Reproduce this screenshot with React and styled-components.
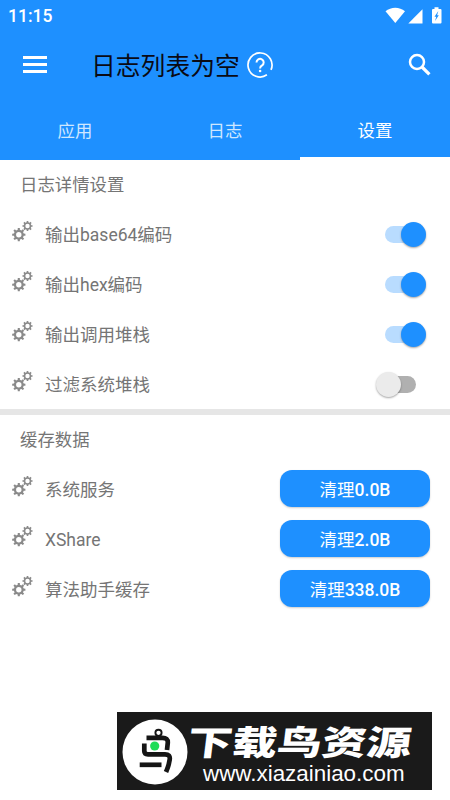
import React, { useState } from 'react';
import styled, { createGlobalStyle } from 'styled-components';

const BLUE = '#1e90ff';

const GlobalStyle = createGlobalStyle`
    * {
        box-sizing: border-box;
    }

    body {
        margin: 0;
        background: #fff;
        font-family: Roboto, "Noto Sans CJK SC", sans-serif;
    }
`;

const Screen = styled.div`
    display: flex;
    flex-direction: column;
    height: 800px;
    overflow: hidden;
    background: #fff;
`;

const Header = styled.header`
    height: 160px;
    background: ${BLUE};
    color: #fff;
`;

const StatusBar = styled.div`
    display: flex;
    align-items: center;
    justify-content: space-between;
    height: 30px;
    padding: 1px 7px 0 8px;
    font-size: 17.5px;
    font-weight: 500;
`;

const Toolbar = styled.div`
    display: flex;
    align-items: center;
    height: 70px;
    padding: 0 18px 0 23px;
`;

const MenuButton = styled.button`
    display: flex;
    flex-direction: column;
    gap: 4px;
    width: 24px;
    margin-bottom: 1px;
    padding: 0;
    border: 0;
    background: none;
`;

const MenuLine = styled.span`
    height: 3px;
    background: #fff;
`;

const Title = styled.h1`
    margin: 0 7px 0 44px;
    padding-top: 4px;
    color: #0a0a14;
    font-size: 24.8px;
    font-weight: 400;
    line-height: 36px;
`;

const SearchIcon = styled.svg`
    margin-left: auto;
`;

const Tabs = styled.nav`
    display: flex;
    height: 60px;
`;

const Tab = styled.button`
    flex: 1;
    padding: 4px 0 0;
    border: 0;
    border-bottom: 3px solid ${({ $active }) => ($active ? '#fff' : BLUE)};
    background: none;
    color: ${({ $active }) => ($active ? '#fff' : '#cfe7ff')};
    font: 400 17.4px/24px Roboto, "Noto Sans CJK SC", sans-serif;
`;

const SectionTitle = styled.h2`
    height: 49px;
    margin: 0;
    padding: 1px 0 0 20px;
    color: #757575;
    font-size: 17.4px;
    font-weight: 400;
    line-height: 49px;
`;

const Divider = styled.div`
    height: 6px;
    background: #e6e6e6;
`;

const Row = styled.div`
    display: flex;
    align-items: center;
    height: 50px;
    padding: 0 20px 0 12px;
    color: #757575;
`;

const RowLabel = styled.span`
    flex: 1;
    margin-left: 12px;
    padding-top: 1px;
    font-size: 17.5px;
    line-height: 26px;
`;

const Track = styled.button`
    display: flex;
    align-items: center;
    justify-content: ${({ $on }) => ($on ? 'flex-end' : 'flex-start')};
    width: 31px;
    height: 17px;
    margin: 0 14px 0 0;
    padding: 0;
    border: 0;
    border-radius: 9px;
    background: ${({ $on }) => ($on ? '#b9dcff' : '#b0b0b0')};
`;

const Thumb = styled.span`
    flex: none;
    width: 25px;
    height: 25px;
    margin: 0 -9.5px;
    border-radius: 50%;
    background: ${({ $on }) => ($on ? BLUE : '#ebebeb')};
    box-shadow: 0 1px 2px rgba(0, 0, 0, 0.35);
`;

const ClearButton = styled.button`
    width: 150px;
    height: 37px;
    margin-bottom: 2px;
    padding: 4px 0 0;
    border: 0;
    border-radius: 12px;
    background: ${BLUE};
    box-shadow: 0 1px 2px rgba(0, 0, 0, 0.2);
    color: #fff;
    font: 500 17.5px/26px Roboto, "Noto Sans CJK SC", sans-serif;
`;

const ClearVerb = styled.span`
    font-weight: 400;
`;

const Banner = styled.footer`
    display: flex;
    align-items: center;
    align-self: flex-end;
    width: 315px;
    height: 78px;
    margin: auto 18px 10px 0;
    padding: 2px 0 0 5px;
    background: #1a1a1a;
    color: #fff;
`;

const BannerText = styled.div`
    display: flex;
    flex-direction: column;
    padding-top: 4px;
`;

const BannerName = styled.div`
    width: 190px;
    font-family: "Noto Sans CJK SC", sans-serif;
    font-size: 37px;
    font-weight: 900;
    line-height: 39px;
    white-space: nowrap;
    transform: skewX(-7deg) scale(1.21, 0.92);
    transform-origin: 0 50%;
`;

const BannerUrl = styled.div`
    margin-left: 15px;
    font-family: "Liberation Sans", sans-serif;
    font-size: 22.4px;
    line-height: 27px;
`;

function gearPath(cx, cy, outer, inner, teeth = 8) {
    const points = [];
    const step = (Math.PI * 2) / teeth;

    for (let i = 0; i < teeth; i++) {
        const mid = i * step;
        [[-0.28, inner], [-0.2, outer], [0.2, outer], [0.28, inner]].forEach(([turn, r]) => {
            const a = mid + turn * step;
            points.push(`${(cx + Math.cos(a) * r).toFixed(2)} ${(cy + Math.sin(a) * r).toFixed(2)}`);
        });
    }

    return `M${points.join('L')}Z`;
}

function hole(cx, cy, r) {
    return `M${cx - r} ${cy}a${r} ${r} 0 1 0 ${r * 2} 0a${r} ${r} 0 1 0 ${-r * 2} 0Z`;
}

const GEARS = gearPath(6.8, 14.7, 6.7, 5) + hole(6.8, 14.7, 2.7)
    + gearPath(15.5, 6, 5.1, 3.9) + hole(15.5, 6, 2.2);

function Gears() {
    return (
        <svg width="21" height="28" viewBox="0 0 21 28">
            <path d={GEARS} fill="#8a8a8a" fillRule="evenodd" />
        </svg>
    );
}

function StatusIcons() {
    return (
        <svg width="58" height="18" viewBox="0 0 58 18" fill="#fff">
            <path d="M0.5 4.2C6 -0.5 14.5 -0.5 20 4.2L10.3 16Z" />
            <path d="M37.5 2.3V16.5H23.3Z" />
            <path
                fillRule="evenodd"
                d="M49.5 0.3h4v1.6h2q1 0 1 1V15.5q0 1-1 1h-7.5q-1 0-1-1V2.9q0-1 1-1h1.5ZM53.3 4.1l-3.8 5.6h1.8l-1.3 4.4 3.8-5.8h-1.7Z"
            />
        </svg>
    );
}

function HelpIcon() {
    return (
        <svg width="26" height="26" viewBox="0 0 26 26" fill="none" stroke="#fff" strokeWidth="1.7">
            <path d="M19.9 22.8A12 12 0 1 1 24 17.8" />
            <path d="M9.5 10.5a3.6 3.6 0 1 1 5.5 3q-1.9 1-1.9 2.9" strokeWidth="2" />
            <circle cx="13.1" cy="19" r="1.3" fill="#fff" stroke="none" />
        </svg>
    );
}

function BirdLogo() {
    return (
        <svg width="66" height="66" viewBox="0 0 66 66">
            <circle cx="33" cy="33" r="32.5" fill="#fff" />
            <g fill="none" stroke="#151515" strokeWidth="4.7">
                <circle cx="36.5" cy="13.8" r="3.1" strokeWidth="1.9" />
                <path d="M24.5 18.8H40.5Q46 18.8 45.8 23.5L45 31" />
                <path d="M22.3 24.5V32Q22.3 35.3 26 35.3H43Q48.5 35.3 47.7 40.5L46.8 45Q46.3 47.5 44 53" />
                <path d="M17.7 45.8H39.5" />
            </g>
            <circle cx="32.7" cy="27" r="4.6" fill="#1fdc58" />
        </svg>
    );
}

function SwitchRow({ label, initial }) {
    const [on, setOn] = useState(initial);

    return (
        <Row>
            <Gears />
            <RowLabel>{label}</RowLabel>
            <Track $on={on} role="switch" aria-checked={on} onClick={() => setOn(!on)}>
                <Thumb $on={on} />
            </Track>
        </Row>
    );
}

function CacheRow({ label, size }) {
    return (
        <Row>
            <Gears />
            <RowLabel>{label}</RowLabel>
            <ClearButton>
                <ClearVerb>清理</ClearVerb>
                {size}
            </ClearButton>
        </Row>
    );
}

function App() {
    const [tab, setTab] = useState('设置');

    return (
        <Screen>
            <GlobalStyle />
            <Header>
                <StatusBar>
                    <span>11:15</span>
                    <StatusIcons />
                </StatusBar>
                <Toolbar>
                    <MenuButton>
                        <MenuLine />
                        <MenuLine />
                        <MenuLine />
                    </MenuButton>
                    <Title>日志列表为空</Title>
                    <HelpIcon />
                    <SearchIcon width="24" height="24" viewBox="0 0 24 24" fill="none" stroke="#fff">
                        <circle cx="9" cy="9" r="7" strokeWidth="2.5" />
                        <path d="M14 14L21.4 21.4" strokeWidth="3.2" />
                    </SearchIcon>
                </Toolbar>
                <Tabs>
                    {['应用', '日志', '设置'].map(name => (
                        <Tab key={name} $active={tab === name} onClick={() => setTab(name)}>
                            {name}
                        </Tab>
                    ))}
                </Tabs>
            </Header>

            <section>
                <SectionTitle>日志详情设置</SectionTitle>
                <SwitchRow label="输出base64编码" initial={true} />
                <SwitchRow label="输出hex编码" initial={true} />
                <SwitchRow label="输出调用堆栈" initial={true} />
                <SwitchRow label="过滤系统堆栈" initial={false} />
            </section>
            <Divider />
            <section>
                <SectionTitle>缓存数据</SectionTitle>
                <CacheRow label="系统服务" size="0.0B" />
                <CacheRow label="XShare" size="2.0B" />
                <CacheRow label="算法助手缓存" size="338.0B" />
            </section>

            <Banner>
                <BirdLogo />
                <BannerText>
                    <BannerName>下载鸟资源</BannerName>
                    <BannerUrl>www.xiazainiao.com</BannerUrl>
                </BannerText>
            </Banner>
        </Screen>
    );
}

export default App;
